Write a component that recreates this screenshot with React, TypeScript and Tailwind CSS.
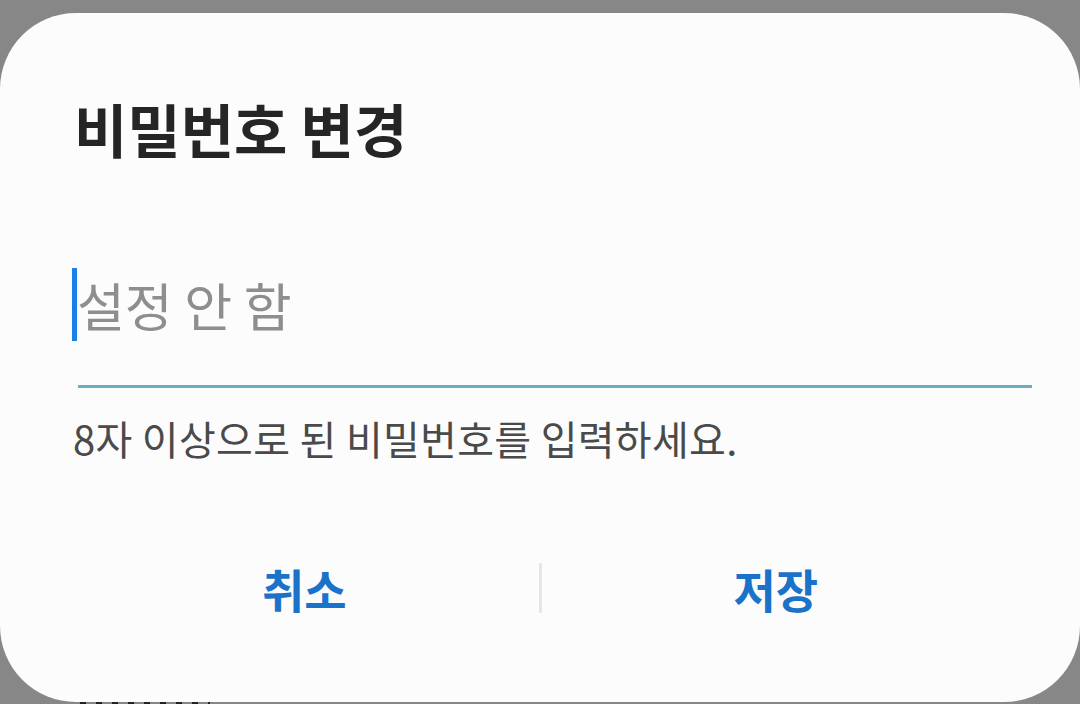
import React from "react";

export default function App() {
  const font = { fontFamily: '"Noto Sans CJK KR", "Noto Sans", sans-serif' };
  return (
    <div className="w-[1080px] h-[704px] bg-[#878787] overflow-hidden flex flex-col" style={font}>
      <div className="mt-[13px] h-[689px] w-[1080px] bg-[#fcfcfc] rounded-[76px] flex flex-col">
        <div className="pt-[75px] pl-[74px] h-[155px] text-[58px] leading-[80px] font-bold text-[#252525]">
          비밀번호 변경
        </div>
        <div className="mt-[100px] pl-[72px] flex items-center h-[73px]">
          <div className="w-[5px] h-[73px] bg-[#1a7fe8]" />
          <div className="text-[52px] leading-[73px] text-[#8e8e8e]">설정 안 함</div>
        </div>
        <div className="mt-[44px] ml-[78px] w-[954px] h-[3px] bg-[#6aaec4]" />
        <div className="mt-[25px] pl-[73px] text-[40px] leading-[50px] tracking-[0.3px] text-[#4a4a4a]">
          8자 이상으로 된 비밀번호를 입력하세요.
        </div>
        <div className="mt-[98px] mx-[70px] flex items-center h-[54px]">
          <div className="flex-1 text-center text-[46px] leading-[54px] font-bold text-[#1a73c9]">취소</div>
          <div className="w-[3px] h-[50px] bg-[#e6e6e6]" />
          <div className="flex-1 text-center text-[46px] leading-[54px] font-bold text-[#1a73c9]">저장</div>
        </div>
      </div>
      <div className="h-[2px] flex">
        <div className="ml-[80px] w-[130px] h-[2px] bg-[repeating-linear-gradient(90deg,#222_0px,#222_6px,transparent_6px,transparent_16px)]" />
      </div>
    </div>
  );
}
